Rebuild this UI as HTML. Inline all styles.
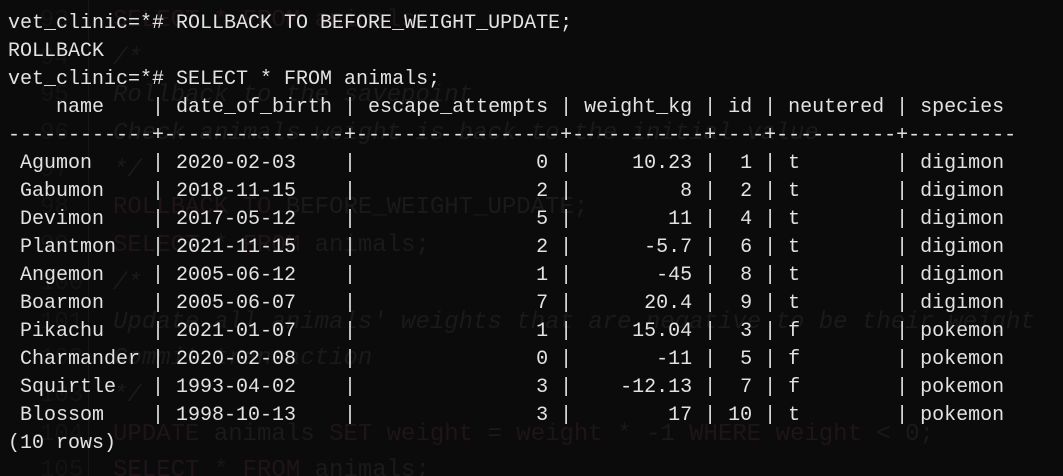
<!DOCTYPE html>
<html><head><meta charset="utf-8"><style>
html,body{margin:0;padding:0;background:#0b0b0b;width:1063px;height:476px;overflow:hidden;position:relative}
.bg{position:absolute;left:0;top:0;font-family:"Liberation Mono",monospace;font-size:24px;color:#1a1a1a;white-space:pre}
.bg div{position:absolute;height:37px;line-height:37px}
.ln{left:40px;color:#131313}
.cd{left:113px}
.it{font-style:italic}
.k{color:#1e1419}
.vl{position:absolute;left:88px;top:0;width:1px;height:476px;background:#151915}
pre{position:absolute;left:8px;top:10px;margin:0;font-family:"Liberation Mono",monospace;font-size:20px;line-height:28px;color:#e2e2e2;letter-spacing:0px}
</style></head><body>
<div class="vl"></div>
<div class="bg">
<div class="ln" style="top:2px">93</div><div class="cd k" style="top:2px">SELECT * FROM animals;</div>
<div class="ln" style="top:40px">94</div><div class="cd it" style="top:40px">/*</div>
<div class="ln" style="top:77px">95</div><div class="cd it" style="top:77px">Rollback to the savepoint</div>
<div class="ln" style="top:115px">96</div><div class="cd it" style="top:115px">Check animals weight is back to the initial value</div>
<div class="ln" style="top:152px">97</div><div class="cd it" style="top:152px">*/</div>
<div class="ln" style="top:189px">98</div><div class="cd" style="top:189px"><span class="k">ROLLBACK TO</span> BEFORE_WEIGHT_UPDATE;</div>
<div class="ln" style="top:227px">99</div><div class="cd" style="top:227px"><span class="k">SELECT * FROM</span> animals;</div>
<div class="ln" style="top:265px">100</div><div class="cd it" style="top:265px">/*</div>
<div class="ln" style="top:304px">101</div><div class="cd it" style="top:304px">Update all animals' weights that are negative to be their weight</div>
<div class="ln" style="top:340px">102</div><div class="cd it" style="top:340px">Commit transaction</div>
<div class="ln" style="top:377px">103</div><div class="cd it" style="top:377px">*/</div>
<div class="ln" style="top:416px">104</div><div class="cd" style="top:416px"><span class="k">UPDATE</span> animals <span class="k">SET weight</span> = <span class="k">weight</span> * -1 <span class="k">WHERE weight</span> &lt; 0;</div>
<div class="ln" style="top:452px">105</div><div class="cd" style="top:452px"><span class="k">SELECT * FROM</span> animals;</div>
</div>
<pre>vet_clinic=*# ROLLBACK TO BEFORE_WEIGHT_UPDATE;
ROLLBACK
vet_clinic=*# SELECT * FROM animals;
    name    | date_of_birth | escape_attempts | weight_kg | id | neutered | species
------------+---------------+-----------------+-----------+----+----------+---------
 Agumon     | 2020-02-03    |               0 |     10.23 |  1 | t        | digimon
 Gabumon    | 2018-11-15    |               2 |         8 |  2 | t        | digimon
 Devimon    | 2017-05-12    |               5 |        11 |  4 | t        | digimon
 Plantmon   | 2021-11-15    |               2 |      -5.7 |  6 | t        | digimon
 Angemon    | 2005-06-12    |               1 |       -45 |  8 | t        | digimon
 Boarmon    | 2005-06-07    |               7 |      20.4 |  9 | t        | digimon
 Pikachu    | 2021-01-07    |               1 |     15.04 |  3 | f        | pokemon
 Charmander | 2020-02-08    |               0 |       -11 |  5 | f        | pokemon
 Squirtle   | 1993-04-02    |               3 |    -12.13 |  7 | f        | pokemon
 Blossom    | 1998-10-13    |               3 |        17 | 10 | t        | pokemon
(10 rows)</pre>
</body></html>
